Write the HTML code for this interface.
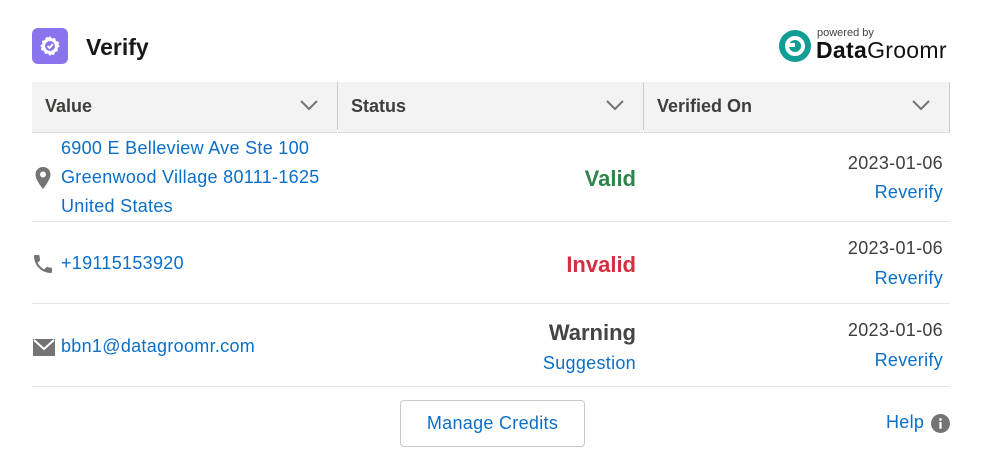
<!DOCTYPE html>
<html><head><style>
body{margin:0;width:986px;height:475px;background:#fff;font-family:"Liberation Sans",sans-serif;position:relative;overflow:hidden}
.a{position:absolute;white-space:nowrap}
.l{color:#0b6fc9;font-size:18px;letter-spacing:0.3px}
.hd{position:absolute;top:82px;height:50px;background:#f3f3f3;border-bottom:1px solid #ddd}
.ht{position:absolute;top:96px;font-size:18px;font-weight:bold;color:#3e3e3c}
.line{position:absolute;left:32px;width:918px;height:1px;background:#e5e5e5}
.chev{position:absolute;top:99px}
.r{text-align:right}
</style></head><body>
<div class="a" style="left:32px;top:28px;width:36px;height:36px;border-radius:6px;background:#8a74ee"></div>
<svg class="a" style="left:38px;top:34px" width="24" height="24" viewBox="0 0 24 24"><path fill="#fff" d="M12 2l2 2.5 3-.5 1 3 3 1-.5 3L22 12l-2.5 2 .5 3-3 1-1 3-3-.5L12 22l-2-2.5-3 .5-1-3-3-1 .5-3L2 12l2.5-2L4 7l3-1 1-3 3 .5z"/><circle cx="12" cy="12" r="5" fill="#8a74ee"/><path d="M9.5 12l2 2 3.5-4" stroke="#fff" stroke-width="1.8" fill="none"/></svg>
<div class="a" style="left:86px;top:34px;font-size:23px;font-weight:bold;color:#181818">Verify</div>
<svg class="a" style="left:778px;top:29px" width="34" height="34" viewBox="0 0 34 34"><circle cx="17" cy="17" r="16" fill="#0f9d96"/><circle cx="17" cy="17" r="8" fill="none" stroke="#fff" stroke-width="4"/><rect x="8" y="14" width="9" height="4" fill="#fff"/></svg>
<div class="a" style="left:817px;top:27px;font-size:11px;color:#444">powered by</div>
<div class="a" style="left:816px;top:37px;font-size:23px;letter-spacing:0.3px;color:#111"><b>Data</b>Groomr</div>

<div class="hd" style="left:32px;width:305px"></div>
<div class="hd" style="left:338px;width:305px"></div>
<div class="hd" style="left:644px;width:305px;border-right:1px solid #ccc"></div>
<div class="a" style="left:337px;top:82px;width:1px;height:48px;background:#ccc"></div>
<div class="a" style="left:643px;top:82px;width:1px;height:48px;background:#ccc"></div>
<div class="ht" style="left:45px">Value</div>
<div class="ht" style="left:351px">Status</div>
<div class="ht" style="left:657px">Verified On</div>
<svg class="chev" style="left:299px" width="20" height="12"><path d="M2 2l8 8 8-8" stroke="#747474" stroke-width="2" fill="none"/></svg>
<svg class="chev" style="left:605px" width="20" height="12"><path d="M2 2l8 8 8-8" stroke="#747474" stroke-width="2" fill="none"/></svg>
<svg class="chev" style="left:911px" width="20" height="12"><path d="M2 2l8 8 8-8" stroke="#747474" stroke-width="2" fill="none"/></svg>

<svg class="a" style="left:34px;top:166px" width="18" height="24" viewBox="0 0 18 24"><path fill="#747474" d="M9 1C4.6 1 1.5 4.3 1.5 8.5 1.5 14 9 23 9 23s7.5-9 7.5-14.5C16.5 4.3 13.4 1 9 1zm0 10.5a3 3 0 110-6 3 3 0 010 6z"/></svg>
<div class="a l" style="left:61px;top:138px">6900 E Belleview Ave Ste 100</div>
<div class="a l" style="left:61px;top:167px">Greenwood Village 80111-1625</div>
<div class="a l" style="left:61px;top:196px">United States</div>
<div class="a r" style="right:350px;top:166px;font-size:22px;font-weight:bold;color:#2e844a">Valid</div>
<div class="a r" style="right:43px;top:153px;font-size:18px;letter-spacing:0.3px;color:#3e3e3c">2023-01-06</div>
<div class="a r l" style="right:43px;top:182px">Reverify</div>
<div class="line" style="top:221px"></div>

<svg class="a" style="left:31px;top:252px" width="24" height="24" viewBox="0 0 24 24"><path fill="#747474" d="M6.6 10.8c1.4 2.8 3.8 5.1 6.6 6.6l2.2-2.2c.3-.3.7-.4 1-.2 1.1.4 2.3.6 3.6.6.6 0 1 .4 1 1V20c0 .6-.4 1-1 1C10.6 21 3 13.4 3 4c0-.6.4-1 1-1h3.5c.6 0 1 .4 1 1 0 1.3.2 2.5.6 3.6.1.3 0 .7-.2 1z"/></svg>
<div class="a l" style="left:61px;top:253px">+19115153920</div>
<div class="a r" style="right:350px;top:252px;font-size:22px;font-weight:bold;color:#d62d3f">Invalid</div>
<div class="a r" style="right:43px;top:238px;font-size:18px;letter-spacing:0.3px;color:#3e3e3c">2023-01-06</div>
<div class="a r l" style="right:43px;top:268px">Reverify</div>
<div class="line" style="top:303px"></div>

<svg class="a" style="left:33px;top:339px" width="22" height="17" viewBox="0 0 22 17"><path fill="#747474" d="M0 0h22v17H0z"/><path d="M1 1l10 9 10-9" stroke="#fff" stroke-width="2" fill="none"/></svg>
<div class="a l" style="left:61px;top:336px">bbn1@datagroomr.com</div>
<div class="a r" style="right:350px;top:320px;font-size:22px;font-weight:bold;color:#444">Warning</div>
<div class="a r l" style="right:350px;top:353px">Suggestion</div>
<div class="a r" style="right:43px;top:320px;font-size:18px;letter-spacing:0.3px;color:#3e3e3c">2023-01-06</div>
<div class="a r l" style="right:43px;top:350px">Reverify</div>
<div class="line" style="top:386px"></div>

<div class="a" style="left:400px;top:400px;width:183px;height:45px;border:1px solid #c9c9c9;border-radius:4px;text-align:center;line-height:45px;font-size:18px;letter-spacing:0.3px;color:#0b6fc9">Manage Credits</div>
<div class="a l" style="left:886px;top:412px">Help</div>
<svg class="a" style="left:931px;top:414px" width="19" height="19" viewBox="0 0 20 20"><circle cx="10" cy="10" r="10" fill="#747474"/><rect x="8.8" y="8.5" width="2.4" height="7" fill="#fff"/><circle cx="10" cy="5.8" r="1.4" fill="#fff"/></svg>
</body></html>
